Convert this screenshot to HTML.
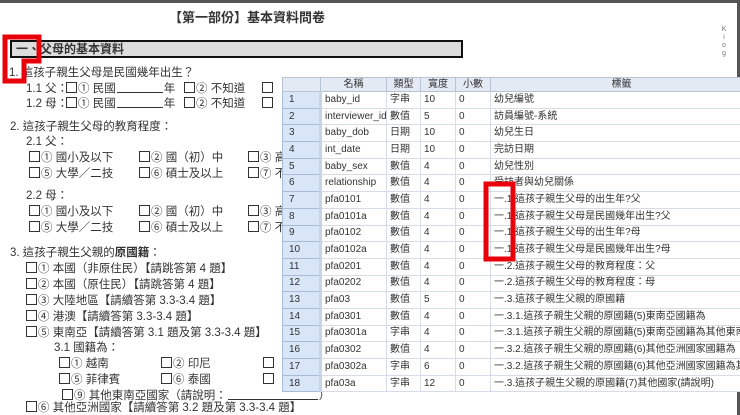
<!DOCTYPE html>
<html><head><meta charset="utf-8"><style>
*{margin:0;padding:0;box-sizing:border-box}
body{width:740px;height:415px;overflow:hidden;background:#fff;position:relative;font-family:"Liberation Sans","Noto Sans CJK TC",sans-serif;color:#333}
.t{position:absolute;font-size:11.5px;white-space:nowrap;line-height:14px}
.bx{display:inline-block;width:11px;height:11px;border:1.3px solid #333;vertical-align:-1px;margin-right:1px}
.ul{display:inline-block;width:46px;border-bottom:1px solid #333;height:11px;vertical-align:-1px;margin:0 1px}
table{position:absolute;left:282px;top:77px;width:470px;border-collapse:collapse;font-size:10px;font-family:"Liberation Sans","Noto Sans CJK TC",sans-serif;background:#fff;table-layout:fixed}
td,th{height:16.7px;line-height:14px;border:1px solid #d6dde8;padding:0 3px;white-space:nowrap;overflow:hidden;text-align:left;font-weight:normal;color:#333}
th{background:#e3eaf4;text-align:center;height:14px;line-height:11px;border-color:#b8c4d6}
td.n{background:#d8e6f8;border:1px solid #a8bcd8;border-right:3px solid #c8d4e6;padding-left:6px}
</style></head><body>
<div style="position:absolute;left:0;top:0;width:740px;height:3px;background:#555"></div>
<div style="position:absolute;right:0;top:0;width:3px;height:415px;background:#555"></div>
<div class="t" style="left:169px;top:11px;font-size:13px;font-weight:bold;color:#333">【第一部份】基本資料問卷</div>
<div style="position:absolute;left:10px;top:40px;width:453px;height:18px;background:#ddd;border:2px solid #111"></div>
<div class="t" style="left:16px;top:42px;font-weight:bold;font-size:12px">一、父母的基本資料</div>
<div style="position:absolute;left:720px;top:26px;font-size:7px;color:#777;line-height:8px;width:8px;text-align:center">K<br>i<br>o<br>g</div>
<div class="t" style="left:9px;top:66px">1. 這孩子親生父母是民國幾年出生？</div>

<div class="t" style="left:26px;top:82px">1.1 父：</div>
<div class="t" style="left:66px;top:82px"><span class="bx"></span>① 民國<span class="ul"></span>年</div>
<div class="t" style="left:184px;top:82px"><span class="bx"></span>② 不知道</div>
<div class="t" style="left:262px;top:82px"><span class="bx"></span></div>
<div class="t" style="left:26px;top:97px">1.2 母：</div>
<div class="t" style="left:66px;top:97px"><span class="bx"></span>① 民國<span class="ul"></span>年</div>
<div class="t" style="left:184px;top:97px"><span class="bx"></span>② 不知道</div>
<div class="t" style="left:262px;top:97px"><span class="bx"></span></div>

<div class="t" style="left:10px;top:120px">2. 這孩子親生父母的教育程度：</div>
<div class="t" style="left:26px;top:135px">2.1 父：</div>
<div class="t" style="left:29px;top:151px"><span class="bx"></span>① 國小及以下</div>
<div class="t" style="left:139px;top:151px"><span class="bx"></span>② 國（初）中</div>
<div class="t" style="left:248px;top:151px"><span class="bx"></span>③ 高</div>
<div class="t" style="left:29px;top:167px"><span class="bx"></span>⑤ 大學／二技</div>
<div class="t" style="left:139px;top:167px"><span class="bx"></span>⑥ 碩士及以上</div>
<div class="t" style="left:248px;top:167px"><span class="bx"></span>⑦ 不</div>
<div class="t" style="left:26px;top:189px">2.2 母：</div>
<div class="t" style="left:29px;top:205px"><span class="bx"></span>① 國小及以下</div>
<div class="t" style="left:139px;top:205px"><span class="bx"></span>② 國（初）中</div>
<div class="t" style="left:248px;top:205px"><span class="bx"></span>③ 高</div>
<div class="t" style="left:29px;top:221px"><span class="bx"></span>⑤ 大學／二技</div>
<div class="t" style="left:139px;top:221px"><span class="bx"></span>⑥ 碩士及以上</div>
<div class="t" style="left:248px;top:221px"><span class="bx"></span>⑦ 不</div>

<div class="t" style="left:10px;top:246px">3. 這孩子親生父親的<b>原國籍</b>：</div>
<div class="t" style="left:26px;top:262px"><span class="bx"></span>① 本國（非原住民）【請跳答第 4 題】</div>
<div class="t" style="left:26px;top:278px"><span class="bx"></span>② 本國（原住民）【請跳答第 4 題】</div>
<div class="t" style="left:26px;top:294px"><span class="bx"></span>③ 大陸地區【請續答第 3.3-3.4 題】</div>
<div class="t" style="left:26px;top:310px"><span class="bx"></span>④ 港澳【請續答第 3.3-3.4 題】</div>
<div class="t" style="left:26px;top:326px"><span class="bx"></span>⑤ 東南亞【請續答第 3.1 題及第 3.3-3.4 題】</div>
<div class="t" style="left:54px;top:341px">3.1 國籍為：</div>
<div class="t" style="left:59px;top:357px"><span class="bx"></span>① 越南</div>
<div class="t" style="left:161px;top:357px"><span class="bx"></span>② 印尼</div>
<div class="t" style="left:263px;top:357px"><span class="bx"></span></div>
<div class="t" style="left:59px;top:373px"><span class="bx"></span>⑤ 菲律賓</div>
<div class="t" style="left:161px;top:373px"><span class="bx"></span>⑥ 泰國</div>
<div class="t" style="left:263px;top:373px"><span class="bx"></span></div>
<div class="t" style="left:62px;top:389px"><span class="bx"></span>⑨ 其他東南亞國家（請說明：<span class="ul" style="width:90px"></span>）</div>
<div class="t" style="left:26px;top:401px"><span class="bx"></span>⑥ 其他亞洲國家【請續答第 3.2 題及第 3.3-3.4 題】</div>
<table>
<colgroup><col style="width:38px"><col style="width:66px"><col style="width:34px"><col style="width:35px"><col style="width:35px"><col style="width:262px"></colgroup>
<tr><th></th><th>名稱</th><th>類型</th><th>寬度</th><th>小數</th><th>標籤</th></tr>
<tr><td class="n">1</td><td>baby_id</td><td>字串</td><td>10</td><td>0</td><td>幼兒編號</td></tr>
<tr><td class="n">2</td><td>interviewer_id</td><td>數值</td><td>5</td><td>0</td><td>訪員編號-系統</td></tr>
<tr><td class="n">3</td><td>baby_dob</td><td>日期</td><td>10</td><td>0</td><td>幼兒生日</td></tr>
<tr><td class="n">4</td><td>int_date</td><td>日期</td><td>10</td><td>0</td><td>完訪日期</td></tr>
<tr><td class="n">5</td><td>baby_sex</td><td>數值</td><td>4</td><td>0</td><td>幼兒性別</td></tr>
<tr><td class="n">6</td><td>relationship</td><td>數值</td><td>4</td><td>0</td><td>受訪者與幼兒關係</td></tr>
<tr><td class="n">7</td><td>pfa0101</td><td>數值</td><td>4</td><td>0</td><td>一.1.這孩子親生父母的出生年?父</td></tr>
<tr><td class="n">8</td><td>pfa0101a</td><td>數值</td><td>4</td><td>0</td><td>一.1.這孩子親生父母是民國幾年出生?父</td></tr>
<tr><td class="n">9</td><td>pfa0102</td><td>數值</td><td>4</td><td>0</td><td>一.1.這孩子親生父母的出生年?母</td></tr>
<tr><td class="n">10</td><td>pfa0102a</td><td>數值</td><td>4</td><td>0</td><td>一.1.這孩子親生父母是民國幾年出生?母</td></tr>
<tr><td class="n">11</td><td>pfa0201</td><td>數值</td><td>4</td><td>0</td><td>一.2.這孩子親生父母的教育程度：父</td></tr>
<tr><td class="n">12</td><td>pfa0202</td><td>數值</td><td>4</td><td>0</td><td>一.2.這孩子親生父母的教育程度：母</td></tr>
<tr><td class="n">13</td><td>pfa03</td><td>數值</td><td>5</td><td>0</td><td>一.3.這孩子親生父親的原國籍</td></tr>
<tr><td class="n">14</td><td>pfa0301</td><td>數值</td><td>4</td><td>0</td><td>一.3.1.這孩子親生父親的原國籍(5)東南亞國籍為</td></tr>
<tr><td class="n">15</td><td>pfa0301a</td><td>字串</td><td>4</td><td>0</td><td>一.3.1.這孩子親生父親的原國籍(5)東南亞國籍為其他東南亞國家</td></tr>
<tr><td class="n">16</td><td>pfa0302</td><td>數值</td><td>4</td><td>0</td><td>一.3.2.這孩子親生父親的原國籍(6)其他亞洲國家國籍為</td></tr>
<tr><td class="n">17</td><td>pfa0302a</td><td>字串</td><td>6</td><td>0</td><td>一.3.2.這孩子親生父親的原國籍(6)其他亞洲國家國籍為其他(請</td></tr>
<tr><td class="n">18</td><td>pfa03a</td><td>字串</td><td>12</td><td>0</td><td>一.3.這孩子親生父親的原國籍(7)其他國家(請說明)</td></tr>
</table>
<svg style="position:absolute;left:0;top:0" width="740" height="415">
<polygon points="5,37 39,37 39,61 24,61 24,81 5,81" fill="none" stroke="#e8000b" stroke-width="5"/>
<rect x="486" y="184" width="27" height="75" fill="none" stroke="#e8000b" stroke-width="5"/>
</svg>
</body></html>
